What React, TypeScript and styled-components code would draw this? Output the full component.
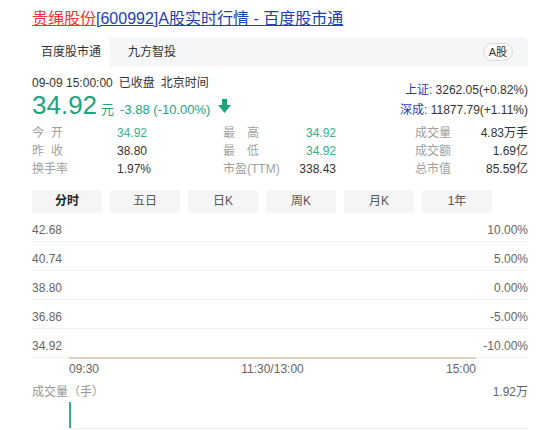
import React from "react";
import styled, { createGlobalStyle } from "styled-components";

const GlobalStyle = createGlobalStyle`
  html, body { margin: 0; padding: 0; background: #fff; }
  body {
    font-family: "Liberation Sans", Arial, "Noto Sans CJK SC", sans-serif;
    color: #333;
  }
  * { box-sizing: border-box; }
`;

const GREEN = "#1fa37f";

const Page = styled.div`
  width: 554px;
  height: 430px;
  overflow: hidden;
  padding: 9px 26px 0 32px;
`;

const Title = styled.h3`
  margin: 0;
  font-size: 16px;
  line-height: 20px;
  font-weight: normal;
  white-space: nowrap;
`;

const TitlePart = styled.a<{ $red?: boolean }>`
  color: ${(p) => (p.$red ? "#f73131" : "#2440b3")};
  text-decoration: underline;
  cursor: pointer;
`;

const TabBar = styled.div`
  margin-top: 8px;
  height: 30px;
  background: #f5f6f8;
  display: flex;
  align-items: stretch;
  gap: 9px;
  padding-right: 15px;
  border-radius: 6px 6px 0 0;
`;

const SourceTab = styled.div<{ $active?: boolean }>`
  padding: 0 9px;
  font-size: 12px;
  line-height: 30px;
  color: #333;
  background: ${(p) => (p.$active ? "#fff" : "transparent")};
  border-radius: 6px 6px 0 0;
`;

const Badge = styled.span`
  margin-left: auto;
  align-self: center;
  height: 18px;
  line-height: 16px;
  padding: 0 5px;
  border: 1px solid #dcdcdc;
  border-radius: 9px;
  font-size: 11px;
  color: #333;
  background: #fafafa;
`;

const Quote = styled.div`
  display: flex;
  justify-content: space-between;
  margin-top: 8px;
`;

const QuoteMain = styled.div`
  display: flex;
  flex-direction: column;
`;

const TimeLine = styled.div`
  font-size: 12px;
  line-height: 16px;
  color: #333;
  white-space: nowrap;
  display: flex;
  gap: 6px;
`;

const PriceLine = styled.div`
  display: flex;
  align-items: baseline;
  height: 28px;
  color: ${GREEN};
  white-space: nowrap;
`;

const Price = styled.span`
  font-size: 26px;
  line-height: 28px;
`;

const Unit = styled.span`
  font-size: 13px;
  margin-left: 4px;
`;

const Change = styled.span`
  font-size: 13px;
  margin-left: 6px;
`;

const Arrow = styled.svg`
  margin-left: 8px;
  align-self: center;
  position: relative;
  top: 1px;
`;

const Indices = styled.div`
  padding-top: 5px;
  text-align: right;
  font-size: 12px;
  line-height: 20px;
  white-space: nowrap;
`;

const IndexName = styled.span`
  color: #2440b3;
`;

const Stats = styled.div`
  margin-top: 4px;
  display: grid;
  grid-template-columns: 191px 192px 113px;
  grid-auto-rows: 18px;
  font-size: 12px;
  line-height: 18px;
`;

const StatCell = styled.div<{ $gapRight?: number; $between?: boolean }>`
  display: flex;
  justify-content: ${(p) => (p.$between ? "space-between" : "flex-start")};
  padding-right: ${(p) => p.$gapRight ?? 0}px;
  white-space: nowrap;
`;

const StatLabel = styled.span<{ $w?: number; $justify?: boolean }>`
  display: inline-block;
  color: #a0a0a0;
  width: ${(p) => (p.$w ? `${p.$w}px` : "auto")};
  text-align: ${(p) => (p.$justify ? "justify" : "left")};
  text-align-last: ${(p) => (p.$justify ? "justify" : "auto")};
`;

const StatLabelBox = styled.span<{ $w: number }>`
  display: inline-block;
  width: ${(p) => p.$w}px;
`;

const StatValue = styled.span<{ $green?: boolean }>`
  color: ${(p) => (p.$green ? "#3aae8c" : "#333")};
`;

const Periods = styled.div`
  margin-top: 12px;
  display: flex;
  gap: 8px;
`;

const PeriodButton = styled.div<{ $active?: boolean }>`
  width: 70px;
  height: 23px;
  line-height: 23px;
  text-align: center;
  background: #f5f5f6;
  border-radius: 3px;
  font-size: 12px;
  color: ${(p) => (p.$active ? "#222" : "#555")};
  font-weight: ${(p) => (p.$active ? "bold" : "normal")};
`;

const Chart = styled.div`
  position: relative;
`;

const GridRow = styled.div`
  height: 29px;
  border-bottom: 1px solid #f0f0f0;
  display: flex;
  justify-content: space-between;
  align-items: flex-end;
  padding-bottom: 4px;
  font-size: 12px;
  line-height: 14px;
  color: #666;
`;

const PriceTrace = styled.svg`
  position: absolute;
  left: 37px;
  bottom: -1px;
`;

const Axis = styled.div`
  padding: 4px 52px 0 37px;
  display: flex;
  justify-content: space-between;
  font-size: 12px;
  line-height: 14px;
  color: #666;
`;

const VolumeHead = styled.div`
  margin-top: 8px;
  display: flex;
  justify-content: space-between;
  font-size: 12px;
  line-height: 16px;
  color: #666;
`;

const VolumeTitle = styled.span`
  color: #999;
`;

const VolumeArea = styled.div`
  margin-left: 37px;
  height: 29px;
  border-bottom: 1px solid #eee;
  display: flex;
  align-items: stretch;
  padding-top: 2px;
`;

const VolumeBar = styled.div`
  width: 2px;
  background: #2db589;
`;

type Stat = { label: string; value: string; green?: boolean; justify?: boolean };

const rows: Stat[][] = [
  [
    { label: "今开", value: "34.92", green: true, justify: true },
    { label: "最高", value: "34.92", green: true, justify: true },
    { label: "成交量", value: "4.83万手" },
  ],
  [
    { label: "昨收", value: "38.80", justify: true },
    { label: "最低", value: "34.92", green: true, justify: true },
    { label: "成交额", value: "1.69亿" },
  ],
  [
    { label: "换手率", value: "1.97%" },
    { label: "市盈(TTM)", value: "338.43" },
    { label: "总市值", value: "85.59亿" },
  ],
];

const gridLabels: [string, string][] = [
  ["42.68", "10.00%"],
  ["40.74", "5.00%"],
  ["38.80", "0.00%"],
  ["36.86", "-5.00%"],
  ["34.92", "-10.00%"],
];

const periods = ["分时", "五日", "日K", "周K", "月K", "1年"];

export default function App() {
  return (
    <>
      <GlobalStyle />
      <Page>
        <Title>
          <TitlePart $red>贵绳股份</TitlePart>
          <TitlePart>[600992]A股实时行情 - 百度股市通</TitlePart>
        </Title>

        <TabBar>
          <SourceTab $active>百度股市通</SourceTab>
          <SourceTab>九方智投</SourceTab>
          <Badge>A股</Badge>
        </TabBar>

        <Quote>
          <QuoteMain>
            <TimeLine>
              <span>09-09 15:00:00</span>
              <span>已收盘</span>
              <span>北京时间</span>
            </TimeLine>
            <PriceLine>
              <Price>34.92</Price>
              <Unit>元</Unit>
              <Change>-3.88 (-10.00%)</Change>
              <Arrow width="13" height="14" viewBox="0 0 13 14">
                <polygon points="4,0 9,0 9,6 13,6 6.5,14 0,6 4,6" fill={GREEN} />
              </Arrow>
            </PriceLine>
          </QuoteMain>
          <Indices>
            <div>
              <IndexName>上证:</IndexName> 3262.05(+0.82%)
            </div>
            <div>
              <IndexName>深成:</IndexName> 11877.79(+1.11%)
            </div>
          </Indices>
        </Quote>

        <Stats>
          {rows.map((row, ri) =>
            row.map((s, ci) => (
              <StatCell
                key={`${ri}-${ci}`}
                $between={ci > 0}
                $gapRight={ci === 1 ? 79 : 0}
              >
                {ci === 0 ? (
                  <StatLabelBox $w={85}>
                    <StatLabel $w={s.justify ? 31 : undefined} $justify={s.justify}>
                      {s.label}
                    </StatLabel>
                  </StatLabelBox>
                ) : (
                  <StatLabel $w={s.justify ? 36 : undefined} $justify={s.justify}>
                    {s.label}
                  </StatLabel>
                )}
                <StatValue $green={s.green}>{s.value}</StatValue>
              </StatCell>
            ))
          )}
        </Stats>

        <Periods>
          {periods.map((p, i) => (
            <PeriodButton key={p} $active={i === 0}>
              {p}
            </PeriodButton>
          ))}
        </Periods>

        <Chart>
          {gridLabels.map(([l, r]) => (
            <GridRow key={l}>
              <span>{l}</span>
              <span>{r}</span>
            </GridRow>
          ))}
          <PriceTrace width="407" height="2" viewBox="0 0 407 2">
            <rect x="0" y="0" width="407" height="2" fill="#ddd2bd" />
          </PriceTrace>
        </Chart>

        <Axis>
          <span>09:30</span>
          <span>11:30/13:00</span>
          <span>15:00</span>
        </Axis>

        <VolumeHead>
          <VolumeTitle>成交量（手）</VolumeTitle>
          <span>1.92万</span>
        </VolumeHead>

        <VolumeArea>
          <VolumeBar />
        </VolumeArea>
      </Page>
    </>
  );
}
